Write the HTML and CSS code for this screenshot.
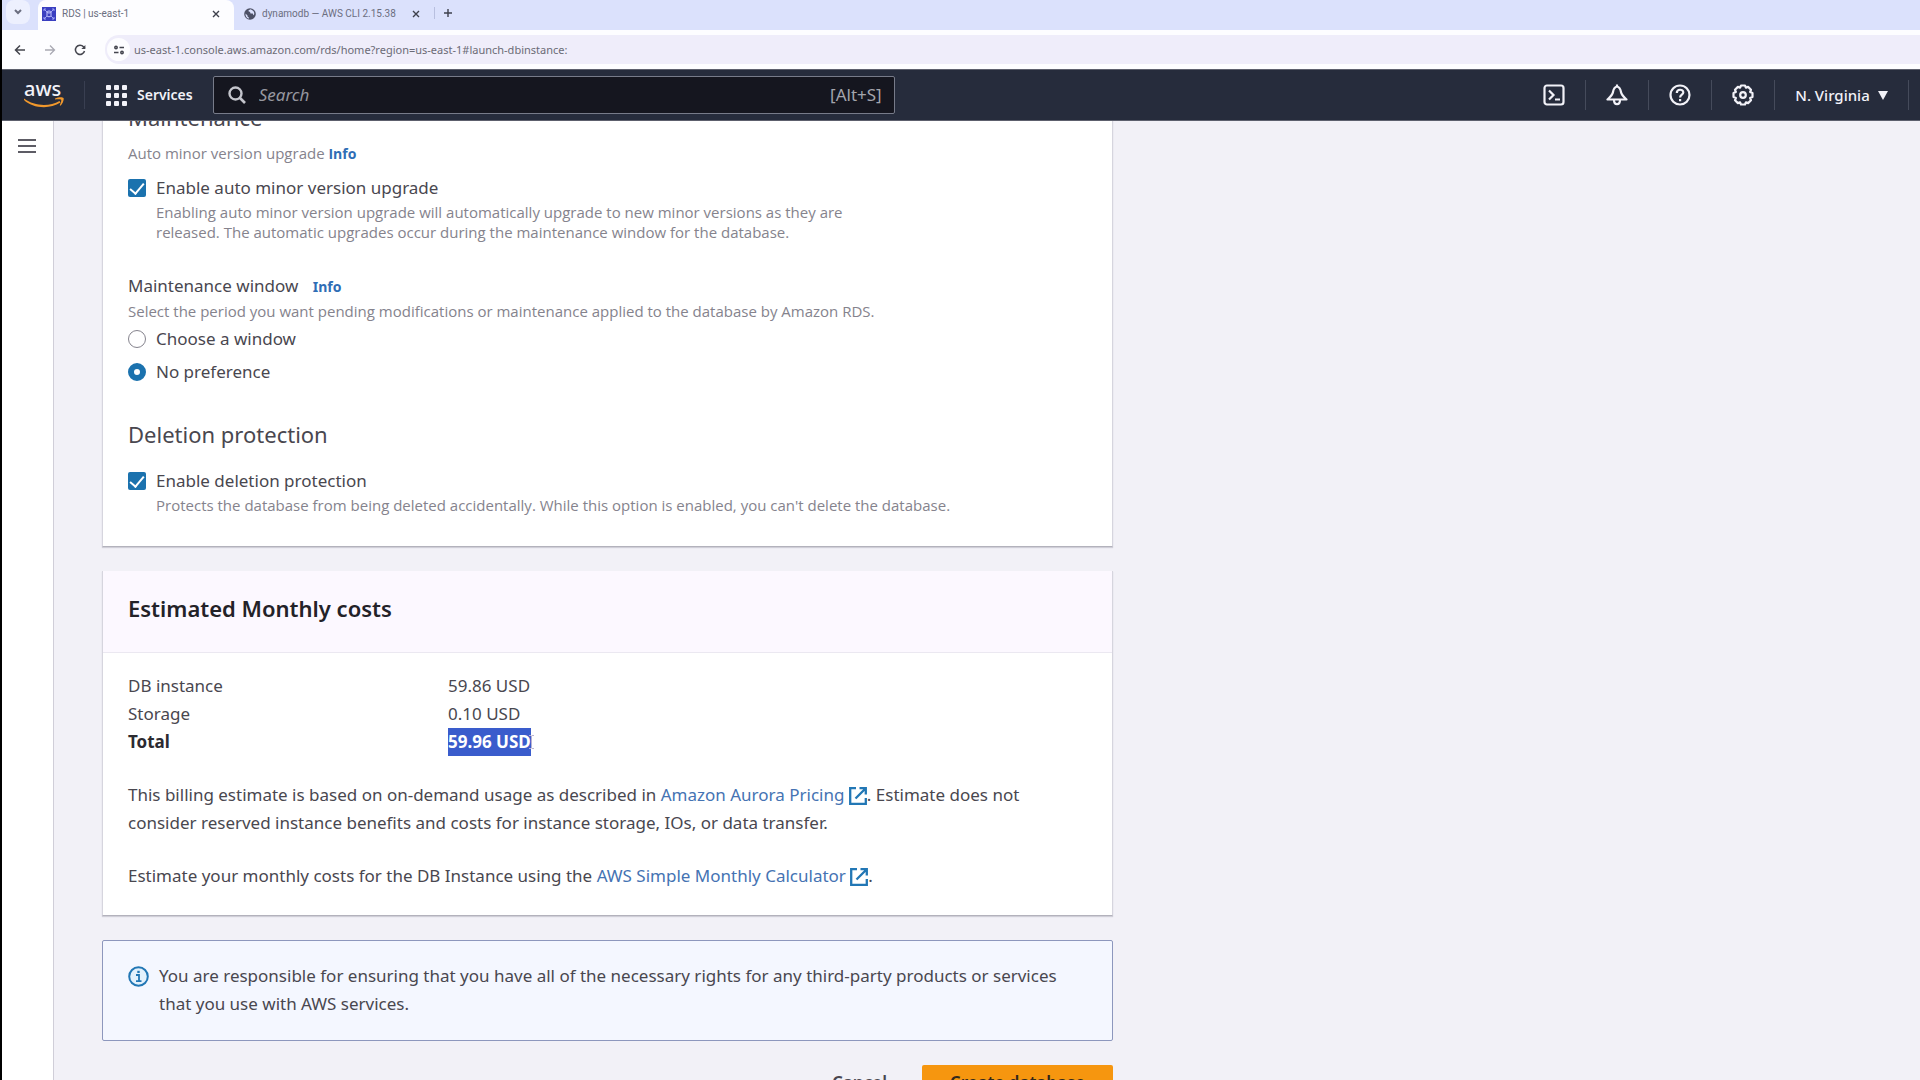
FILE: index.html
```html
<!DOCTYPE html>
<html lang="en">
<head>
<meta charset="utf-8">
<title>RDS | us-east-1</title>
<link rel="stylesheet" href="styles.css">
</head>
<body>
<div class="tab-strip" role="tablist">
  <button class="tab-search" aria-label="Search tabs">
    <svg width="8" height="6" viewBox="0 0 8 6"><path d="M1 1l3 3 3-3" fill="none" stroke="currentColor" stroke-width="2"/></svg>
  </button>
  <div class="tab tab-active" role="tab">
    <svg width="14" height="14" viewBox="0 0 14 14"><rect width="14" height="14" fill="#3a3fc0"/><path d="M2 2l3 3M12 2L9 5M2 12l3-3M12 12L9 9M2 4V2h2M10 2h2v2M2 10v2h2M12 10v2h-2" fill="none" stroke="#9ea3f5"/><ellipse cx="7" cy="5" rx="2" ry="1" fill="none" stroke="#c3c6ff"/><path d="M5 5v4c0 1 4 1 4 0V5" fill="none" stroke="#c3c6ff"/></svg>
    <span class="tab-title">RDS | us-east-1</span>
    <button class="tab-close" aria-label="Close tab"><svg width="8" height="8" viewBox="0 0 8 8"><path d="M1 1l6 6M7 1L1 7" stroke="currentColor" stroke-width="1.4"/></svg></button>
  </div>
  <div class="tab" role="tab">
    <svg width="12" height="12" viewBox="0 0 12 12"><circle cx="6" cy="6" r="5.8" fill="#4d5166"/><path d="M1.5 5.5l2 2v1l1.300 1v1.300C2.500 10 1.300 8 1.500 5.500zM6.500 1.200c-1 .6-2.300 1-2 2 .7.500 1.500.3 1.800 1.200-.4 1.200 1.200 1.200 2.200 1.100 1 .3.400 1.500 1.200 1.700 1-1 1.200-4.500-3.200-6z" fill="#dbe1fc"/></svg>
    <span class="tab-title">dynamodb — AWS CLI 2.15.38</span>
    <button class="tab-close" aria-label="Close tab"><svg width="8" height="8" viewBox="0 0 8 8"><path d="M1 1l6 6M7 1L1 7" stroke="currentColor" stroke-width="1.400"/></svg></button>
  </div>
  <button class="tab-new" aria-label="New tab"><svg width="10" height="10" viewBox="0 0 10 10"><path d="M5 1v8M1 5h8" stroke="currentColor" stroke-width="1.400"/></svg></button>
</div>

<div class="toolbar">
  <button class="tool" aria-label="Back"><svg width="12" height="12" viewBox="0 0 12 12"><path d="M11 6H2M6 1.500L1.500 6 6 10.500" fill="none" stroke="currentColor" stroke-width="1.500"/></svg></button>
  <button class="tool tool-disabled" aria-label="Forward"><svg width="12" height="12" viewBox="0 0 12 12"><path d="M1 6h9M6 1.500L10.500 6 6 10.500" fill="none" stroke="currentColor" stroke-width="1.300"/></svg></button>
  <button class="tool" aria-label="Reload"><svg width="12" height="12" viewBox="0 0 12 12"><path d="M10.500 7A4.600 4.600 0 1 1 9.500 2.800L10.800 4.200" fill="none" stroke="currentColor" stroke-width="1.500"/><path d="M11.400 1v4H7.400z" fill="currentColor"/></svg></button>
  <div class="address">
    <span class="site-info"><svg width="12" height="10" viewBox="0 0 12 10"><g fill="none" stroke="currentColor" stroke-width="1.500"><circle cx="3" cy="2.500" r="1.200"/><path d="M6.500 2.500H11M1 7.500h4.500"/><circle cx="9" cy="7.500" r="1.200"/></g></svg></span>
    <input class="address-input" type="text" aria-label="Address" value="us-east-1.console.aws.amazon.com/rds/home?region=us-east-1#launch-dbinstance:">
  </div>
</div>

<header class="console-nav">
  <a class="logo" href="#" aria-label="AWS home">
    <span class="logo-text">aws</span>
    <svg class="logo-smile" width="40" height="12" viewBox="0 0 40 12"><path d="M0 1.500C10 9 25 10 35.500 4l1 1.600C25 13 8 11 0 3z" fill="#f0982c"/><path d="M31 1.500c3-1.500 7.500-1.700 8.500-.6.800 1.500-.7 5.600-3 7.800l-.8-.4c1-2.300 2-4.800 1.400-5.600-.8-.7-3.600-.5-6-.3z" fill="#f0982c"/></svg>
  </a>
  <button class="services">
    <svg width="21" height="21" viewBox="0 0 21 21" fill="currentColor"><rect width="5" height="5" rx="1"/><rect x="8" width="5" height="5" rx="1"/><rect x="16" width="5" height="5" rx="1"/><rect y="8" width="5" height="5" rx="1"/><rect x="8" y="8" width="5" height="5" rx="1"/><rect x="16" y="8" width="5" height="5" rx="1"/><rect y="16" width="5" height="5" rx="1"/><rect x="8" y="16" width="5" height="5" rx="1"/><rect x="16" y="16" width="5" height="5" rx="1"/></svg>
    <span>Services</span>
  </button>
  <label class="search">
    <svg width="18" height="18" viewBox="0 0 18 18"><circle cx="7.500" cy="7.500" r="6" fill="none" stroke="currentColor" stroke-width="2.400"/><path d="M12 12l5 5" stroke="currentColor" stroke-width="2.600"/></svg>
    <input class="search-input" type="text" placeholder="Search" aria-label="Search">
    <span class="search-key">[Alt+S]</span>
  </label>
  <div class="nav-tools">
    <button class="nav-tool" aria-label="CloudShell"><svg width="22" height="22" viewBox="0 0 22 22" fill="none" stroke="currentColor" stroke-width="2.200"><rect x="1.500" y="1.500" width="19" height="19" rx="2.500"/><path d="M6 6.500l4.500 4.500L6 15.500M12 15.500h5"/></svg></button>
    <button class="nav-tool" aria-label="Notifications"><svg width="22" height="22" viewBox="0 0 22 22" fill="none" stroke="currentColor" stroke-width="2.200" stroke-linejoin="round"><path d="M11 2.500C8.500 3 7.500 5 7 8c-.5 3-2.500 4.500-5.500 7.500h19C17.500 12.500 15.500 11 15 8c-.5-3-1.500-5-4-5.500zM11 3V.500M8 16c0 5.500 6 5.500 6 0"/></svg></button>
    <button class="nav-tool" aria-label="Help"><svg width="22" height="22" viewBox="0 0 22 22" fill="none" stroke="currentColor" stroke-width="2.200"><circle cx="11" cy="11" r="9.500"/><path d="M7.800 9c0-4.300 6.500-4.200 6.500-.5 0 2.200-3.200 2.300-3.200 5M11.100 15v2.200"/></svg></button>
    <button class="nav-tool" aria-label="Settings"><svg width="22" height="22" viewBox="0 0 22 22" fill="none" stroke="currentColor" stroke-width="2.200" stroke-linejoin="round"><path d="M9 1.500h4l.9 2.200 2.200-.8 2.900 2.900-.9 2.200 2.400 1v4l-2.400 1 .9 2.200-2.900 2.900-2.200-.8-.9 2.200H9l-.9-2.200-2.200.8L3 16.200l.9-2.200-2.400-1V9l2.400-1L3 5.800l2.900-2.900 2.200.8z"/><circle cx="11" cy="11" r="2.800"/></svg></button>
    <button class="region"><span>N. Virginia</span><svg width="10" height="9" viewBox="0 0 10 9"><path d="M0 0h10L5 9z" fill="currentColor"/></svg></button>
  </div>
</header>

<div class="workspace">
  <nav class="side-rail">
    <button class="menu" aria-label="Open navigation"><svg width="18" height="16" viewBox="0 0 18 16"><path d="M0 2h18M0 8h18M0 14h18" stroke="currentColor" stroke-width="2"/></svg></button>
  </nav>
  <main class="content">
    <form class="form">
      <section class="card settings">
        <h3 class="section-title">Maintenance</h3>
        <p class="hint group-hint">Auto minor version upgrade <a class="info" href="#">Info</a></p>
        <div class="choice">
          <input class="box" type="checkbox" id="auto-upgrade" checked>
          <label for="auto-upgrade">Enable auto minor version upgrade</label>
        </div>
        <p class="hint choice-hint">Enabling auto minor version upgrade will automatically upgrade to new minor versions as they are released. The automatic upgrades occur during the maintenance window for the database.</p>
        <fieldset class="window-group">
          <legend>Maintenance window <a class="info info-spaced" href="#">Info</a></legend>
          <p class="hint">Select the period you want pending modifications or maintenance applied to the database by Amazon RDS.</p>
          <div class="radios">
            <div class="choice">
              <input class="dot" type="radio" name="window" id="window-choose">
              <label for="window-choose">Choose a window</label>
            </div>
            <div class="choice">
              <input class="dot" type="radio" name="window" id="window-none" checked>
              <label for="window-none">No preference</label>
            </div>
          </div>
        </fieldset>
        <h3 class="section-title">Deletion protection</h3>
        <div class="choice choice-after-title">
          <input class="box" type="checkbox" id="deletion" checked>
          <label for="deletion">Enable deletion protection</label>
        </div>
        <p class="hint choice-hint">Protects the database from being deleted accidentally. While this option is enabled, you can't delete the database.</p>
      </section>

      <section class="card">
        <div class="card-header"><h2 class="card-title">Estimated Monthly costs</h2></div>
        <div class="card-body">
          <table class="costs">
            <tbody>
              <tr><th scope="row">DB instance</th><td>59.86 USD</td></tr>
              <tr><th scope="row">Storage</th><td>0.10 USD</td></tr>
              <tr class="total"><th scope="row">Total</th><td><span class="selected">59.96 USD<svg class="ibeam" width="7" height="14" viewBox="0 0 7 14"><path d="M1 .5h2l.5 1 .5-1h2M3.500 1v12M1 13.500h2l.5-1 .5 1h2" fill="none" stroke="#b9b3d2"/></svg></span></td></tr>
            </tbody>
          </table>
          <p class="note">This billing estimate is based on on-demand usage as described in <a href="#">Amazon Aurora Pricing <svg class="external" width="18" height="18" viewBox="0 0 18 18"><path d="M7 1.200H1.200v15.600h15.600V11M10.500 1.200h6.300v6.300M16.500 1.500L6.500 11.500" fill="none" stroke="currentColor" stroke-width="2.300"/></svg></a>. Estimate does not consider reserved instance benefits and costs for instance storage, IOs, or data transfer.</p>
          <p class="note">Estimate your monthly costs for the DB Instance using the <a href="#">AWS Simple Monthly Calculator <svg class="external" width="18" height="18" viewBox="0 0 18 18"><path d="M7 1.200H1.200v15.600h15.600V11M10.500 1.200h6.300v6.300M16.500 1.500L6.500 11.500" fill="none" stroke="currentColor" stroke-width="2.300"/></svg></a>.</p>
        </div>
      </section>

      <div class="alert" role="note">
        <svg class="alert-icon" width="21" height="21" viewBox="0 0 21 21"><circle cx="10.500" cy="10.500" r="9.300" fill="#e3f1fc" stroke="#2277b5" stroke-width="2"/><path d="M8 9h3v6M8 15.200h5.500" fill="none" stroke="#2277b5" stroke-width="1.800"/><rect x="9.300" y="4.800" width="2.400" height="2.200" fill="#2277b5"/></svg>
        <p>You are responsible for ensuring that you have all of the necessary rights for any third-party products or services that you use with AWS services.</p>
      </div>

      <div class="actions">
        <button type="button" class="btn btn-link">Cancel</button>
        <button type="button" class="btn btn-primary">Create database</button>
      </div>
    </form>
  </main>
</div>
</body>
</html>
```
FILE: styles.css
```css
* { box-sizing: border-box; }

body {
  margin: 0;
  height: 100vh;
  display: flex;
  flex-direction: column;
  overflow: hidden;
  border-left: 2px solid #000;
  background: #f2f1f7;
  color: #49474f;
  font: 17px/28px "Noto Sans", sans-serif;
}

h2, h3, p { margin: 0; }
svg { display: block; flex: none; }
button {
  margin: 0;
  padding: 0;
  border: 0;
  background: none;
  color: inherit;
  font: inherit;
}
a { color: #4573b3; text-decoration: none; }

/* Browser tabs */
.tab-strip {
  flex: none;
  display: flex;
  align-items: stretch;
  height: 30px;
  background: #dbe1fc;
  color: #6b6e80;
  font: 10px/16px Roboto, sans-serif;
}
.tab-search {
  display: flex;
  align-items: center;
  justify-content: center;
  align-self: flex-start;
  width: 24px;
  height: 24px;
  margin: 0 8px 0 4px;
  border-radius: 8px;
  background: #edf0fe;
}
.tab {
  display: flex;
  align-items: center;
  padding: 0 8px 3px 10px;
}
.tab-active {
  width: 196px;
  padding: 0 10px 3px 4px;
  border-radius: 8px 8px 0 0;
  background: #fdfdff;
}
.tab-title {
  width: 138px;
  margin: 0 8px 0 6px;
  overflow: hidden;
  white-space: nowrap;
}
.tab-active .tab-title {
  flex: 1;
  margin-right: 0;
}
.tab-close { padding: 4px; color: #3e404c; }
.tab-new {
  display: flex;
  align-items: center;
  align-self: center;
  height: 12px;
  margin: 0 0 4px 2px;
  padding-left: 8px;
  border-left: 1px solid #b8bfdf;
  color: #3e404c;
}

/* Browser toolbar */
.toolbar {
  flex: none;
  display: flex;
  align-items: center;
  height: 39px;
  padding-left: 3px;
  background: #fdfdff;
  color: #44454e;
}
.tool {
  display: flex;
  align-items: center;
  justify-content: center;
  width: 30px;
  height: 28px;
}
.tool-disabled { color: #a9a9b3; }
.address {
  flex: 1;
  display: flex;
  align-items: center;
  height: 29px;
  margin-left: 10px;
  padding-left: 2px;
  border-radius: 14px 0 0 14px;
  background: #efedfa;
}
.site-info {
  display: flex;
  align-items: center;
  justify-content: center;
  width: 23px;
  height: 23px;
  border-radius: 50%;
  background: #fdfdff;
}
.address-input {
  flex: 1;
  margin-left: 4px;
  padding: 0;
  border: 0;
  background: none;
  color: #6b6b76;
  font: 11px/20px "Noto Sans", sans-serif;
}

/* Console navigation */
.console-nav {
  flex: none;
  display: flex;
  align-items: center;
  height: 52px;
  border: solid #5d606d;
  border-width: 1px 0;
  background: #262c3c;
  color: #f2f2f8;
}
.logo {
  display: flex;
  flex-direction: column;
  width: 83px;
  height: 28px;
  padding-left: 22px;
  border-right: 1px solid #393f51;
  color: #f2f2f8;
}
.logo-text {
  font-size: 20px;
  font-weight: 500;
  line-height: 16px;
}
.services {
  display: flex;
  align-items: center;
  gap: 10px;
  padding: 0 20px 0 21px;
  font-size: 14px;
  font-weight: 600;
}
.search {
  flex: 0 1 682px;
  display: flex;
  align-items: center;
  height: 38px;
  padding: 0 12px 0 14px;
  border: 1px solid #777b89;
  border-radius: 2px;
  background: #15161f;
  color: #c4c5cc;
}
.search-input {
  flex: 1;
  min-width: 0;
  margin-left: 13px;
  padding: 0;
  border: 0;
  background: none;
  color: inherit;
  font: italic 17px/28px "Noto Sans", sans-serif;
}
.search-input::placeholder { color: #96979f; opacity: 1; }
.search-key { color: #a3a4ac; }
.nav-tools {
  display: flex;
  align-items: center;
  margin-left: auto;
  padding-right: 11px;
}
.nav-tool {
  display: flex;
  align-items: center;
  justify-content: center;
  width: 63px;
  height: 30px;
  border-right: 1px solid #454b5b;
}
.region {
  display: flex;
  align-items: center;
  justify-content: center;
  gap: 8px;
  width: 134px;
  height: 30px;
  border-right: 1px solid #454b5b;
  font-size: 15px;
  font-weight: 500;
}

/* Page frame */
.workspace {
  flex: 1;
  min-height: 0;
  display: flex;
}
.side-rail {
  flex: none;
  width: 52px;
  padding: 17px 16px;
  border-right: 1px solid #d0ced8;
  background: #fff;
  color: #5d5c65;
  line-height: 16px;
}
.menu { display: block; }
.content {
  flex: 1;
  min-width: 0;
  padding: 0 48px;
  overflow: hidden;
}
/* The form is scrolled up under the navigation bar. */
.form {
  display: flex;
  flex-direction: column;
  gap: 24px;
  max-width: 1011px;
  margin-top: -44px;
}

/* Cards */
.card {
  border: 1px solid #d6d5de;
  border-top: 0;
  border-bottom-color: #b3b2bc;
  background: #fff;
  box-shadow: 0 1px 1px #d0cfd8;
}
.settings { padding: 24px 25px 31px; }
.section-title {
  font-size: 22px;
  font-weight: 400;
  line-height: 32px;
}
.hint {
  color: #85838d;
  font: 15px/20px "Open Sans", "Noto Sans", sans-serif;
}
.group-hint { margin: 10px 0; }
.choice {
  display: flex;
  align-items: center;
  gap: 10px;
}
.choice-after-title { margin-top: 17px; }
.choice-hint { padding: 0 200px 0 28px; }
.settings > .choice-hint:last-child { padding-right: 0; }
.info {
  color: #2f6db5;
  font-size: 14px;
  font-weight: 700;
}
.info-spaced { margin-left: 10px; }
.window-group {
  margin: 30px 0 32px;
  padding: 0;
  border: 0;
}
.window-group legend { padding: 0; }
.radios {
  display: flex;
  flex-direction: column;
  gap: 5px;
  margin-top: 4px;
}
.box, .dot {
  flex: none;
  display: flex;
  align-items: center;
  justify-content: center;
  appearance: none;
  width: 18px;
  height: 18px;
  margin: 0;
}
.box {
  border-radius: 2px;
  background: #1b72ae;
}
.box::after {
  content: "";
  width: 6px;
  height: 12px;
  margin-bottom: 3px;
  border: solid #fff;
  border-width: 0 2px 2px 0;
  transform: rotate(40deg);
}
.dot {
  border: 1px solid #85838d;
  border-radius: 50%;
  background: #fff;
}
.dot:checked { border: 6px solid #1b72ae; }

.card-header {
  padding: 21px 25px 28px;
  border-bottom: 1px solid #ebe8f1;
  background: #fcf8ff;
}
.card-title {
  color: #232228;
  font-size: 22px;
  font-weight: 600;
  line-height: 32px;
}
.card-body { padding: 19px 25px 25px; }
.costs { border-collapse: collapse; }
.costs th, .costs td {
  padding: 0;
  font-weight: 400;
  text-align: left;
}
.costs th { width: 320px; }
.costs .total th { color: #2c2b31; font-weight: 700; }
.selected {
  position: relative;
  display: inline-block;
  background: #3a5ccc;
  color: #fff;
  font-weight: 700;
  vertical-align: top;
}
.ibeam {
  position: absolute;
  top: 7px;
  right: -4px;
}
.note { margin-top: 25px; }
.external {
  display: inline-block;
  color: #2277b5;
  vertical-align: -4px;
}

/* Notice */
.alert {
  display: flex;
  gap: 10px;
  padding: 21px 40px 22px 25px;
  border: 1px solid #8d97bd;
  border-radius: 2px;
  background: #f4f7ff;
}
.alert-icon { margin-top: 4px; }

/* Form buttons */
.actions {
  display: flex;
  justify-content: flex-end;
}
.btn {
  height: 36px;
  font-weight: 600;
  border-radius: 2px;
}
.btn-link { padding: 0 35px; }
.btn-primary {
  width: 191px;
  background: #f6960f;
  color: #33281c;
}
```
